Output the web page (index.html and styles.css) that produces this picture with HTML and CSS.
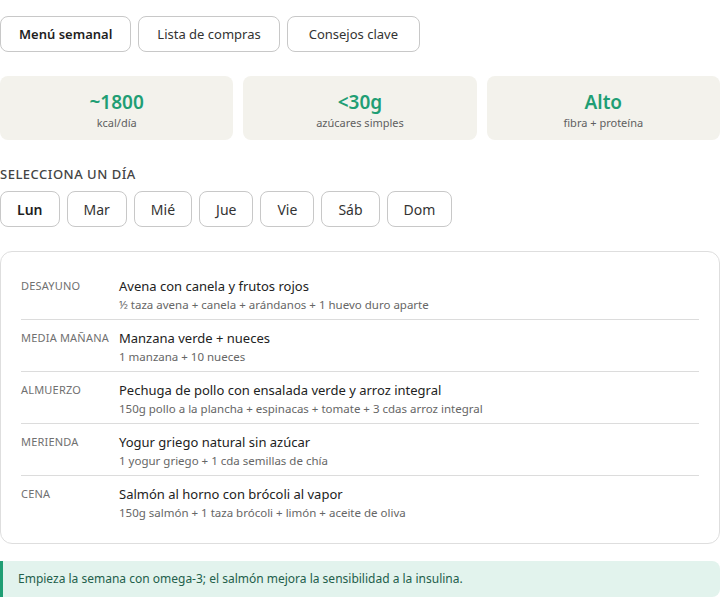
FILE: index.html
```html
<!doctype html>
<html lang="es">
<head>
    <meta charset="utf-8">
    <meta name="viewport" content="width=device-width, initial-scale=1">
    <title>Plan semanal</title>
    <link rel="stylesheet" href="styles.css">
</head>
<body>

<div class="tabs">
    <button class="tab active">Menú semanal</button>
    <button class="tab">Lista de compras</button>
    <button class="tab">Consejos clave</button>
</div>

<div class="stats">
    <div class="stat">
        <div class="stat-value">~1800</div>
        <div class="stat-label">kcal/día</div>
    </div>
    <div class="stat">
        <div class="stat-value">&lt;30g</div>
        <div class="stat-label">azúcares simples</div>
    </div>
    <div class="stat">
        <div class="stat-value">Alto</div>
        <div class="stat-label">fibra + proteína</div>
    </div>
</div>

<div class="section-title">Selecciona un día</div>
<div class="days">
    <button class="day active">Lun</button>
    <button class="day">Mar</button>
    <button class="day">Mié</button>
    <button class="day">Jue</button>
    <button class="day">Vie</button>
    <button class="day">Sáb</button>
    <button class="day">Dom</button>
</div>

<div class="meals">
    <div class="meal">
        <div class="meal-time">Desayuno</div>
        <div class="meal-info">
            <div class="meal-name">Avena con canela y frutos rojos</div>
            <div class="meal-detail">½ taza avena + canela + arándanos + 1 huevo duro aparte</div>
        </div>
    </div>
    <div class="meal">
        <div class="meal-time">Media mañana</div>
        <div class="meal-info">
            <div class="meal-name">Manzana verde + nueces</div>
            <div class="meal-detail">1 manzana + 10 nueces</div>
        </div>
    </div>
    <div class="meal">
        <div class="meal-time">Almuerzo</div>
        <div class="meal-info">
            <div class="meal-name">Pechuga de pollo con ensalada verde y arroz integral</div>
            <div class="meal-detail">150g pollo a la plancha + espinacas + tomate + 3 cdas arroz integral</div>
        </div>
    </div>
    <div class="meal">
        <div class="meal-time">Merienda</div>
        <div class="meal-info">
            <div class="meal-name">Yogur griego natural sin azúcar</div>
            <div class="meal-detail">1 yogur griego + 1 cda semillas de chía</div>
        </div>
    </div>
    <div class="meal">
        <div class="meal-time">Cena</div>
        <div class="meal-info">
            <div class="meal-name">Salmón al horno con brócoli al vapor</div>
            <div class="meal-detail">150g salmón + 1 taza brócoli + limón + aceite de oliva</div>
        </div>
    </div>
</div>

<div class="tip">Empieza la semana con omega-3; el salmón mejora la sensibilidad a la insulina.</div>

</body>
</html>
```

FILE: styles.css
```css
body {
    margin: 0;
    padding-top: 16px;
    font-family: 'Noto Sans', 'Open Sans', sans-serif;
    color: #222;
    background-color: #fff;
}

button {
    font-family: inherit;
    cursor: pointer;
}

/* top tabs */
.tabs {
    display: flex;
    gap: 7px;
}

.tab {
    height: 36px;
    padding: 0 18px;
    font-size: 13px;
    color: #333;
    background-color: #fff;
    border: 1px solid #c8c8c8;
    border-radius: 8px;
}

.tab:last-child {
    padding: 0 21px;
}

.tab.active {
    font-weight: 600;
    color: #1f1f1f;
}

/* summary cards */
.stats {
    display: grid;
    grid-template-columns: repeat(3, 1fr);
    gap: 10px;
    margin-top: 24px;
}

.stat {
    box-sizing: border-box;
    height: 64px;
    padding-top: 3px;
    display: flex;
    flex-direction: column;
    align-items: center;
    justify-content: center;
    background-color: #f3f2ec;
    border-radius: 8px;
}

.stat-value {
    font-size: 19px;
    font-weight: 600;
    line-height: 26px;
    color: #1f9e74;
}

.stat-label {
    font-size: 11px;
    line-height: 16px;
    color: #5f5f5f;
}

/* day picker */
.section-title {
    margin-top: 26px;
    font-size: 13px;
    font-weight: 500;
    line-height: 16px;
    letter-spacing: 0.5px;
    text-transform: uppercase;
    color: #444;
}

.days {
    display: flex;
    gap: 7px;
    margin-top: 9px;
}

.day {
    height: 36px;
    padding: 0 16px;
    font-size: 14px;
    color: #333;
    background-color: #fff;
    border: 1px solid #c8c8c8;
    border-radius: 8px;
}

.day.active {
    font-weight: 600;
    color: #1f1f1f;
}

/* meals list */
.meals {
    margin-top: 24px;
    padding: 16px 20px;
    border: 1px solid #dedede;
    border-radius: 12px;
}

.meal {
    display: flex;
    padding: 8px 0 6px;
    border-bottom: 1px solid #dcdcdc;
}

.meal:last-child {
    border-bottom: none;
}

.meal-time {
    flex: 0 0 98px;
    padding-top: 2px;
    font-size: 11px;
    line-height: 16px;
    letter-spacing: 0.2px;
    text-transform: uppercase;
    color: #707070;
}

.meal-name {
    font-size: 13px;
    line-height: 20px;
    color: #222;
}

.meal-detail {
    font-size: 11.5px;
    line-height: 16px;
    margin-top: 1px;
    color: #666;
}

/* tip banner */
.tip {
    margin-top: 17px;
    padding: 10px 15px;
    font-size: 12px;
    line-height: 16px;
    color: #23604b;
    background-color: #e2f3ed;
    border-left: 3px solid #1f9e74;
    border-radius: 0 8px 8px 0;
}
```
